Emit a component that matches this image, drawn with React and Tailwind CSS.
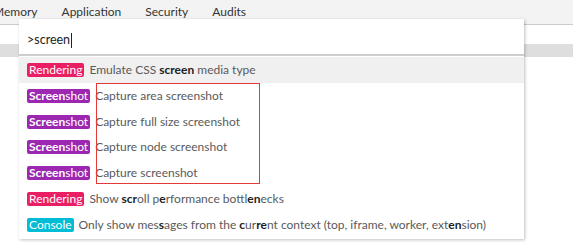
import React from "react";

const rows = [
  {
    color: "bg-[#e91e63]",
    label: [["Rendering", false]],
    text: [["Emulate CSS ", false], ["screen", true], [" media type", false]],
    active: true,
  },
  {
    color: "bg-[#9c27b0]",
    label: [["Screen", true], ["shot", false]],
    text: [["Capture area screenshot", false]],
  },
  {
    color: "bg-[#9c27b0]",
    label: [["Screen", true], ["shot", false]],
    text: [["Capture full size screenshot", false]],
  },
  {
    color: "bg-[#9c27b0]",
    label: [["Screen", true], ["shot", false]],
    text: [["Capture node screenshot", false]],
  },
  {
    color: "bg-[#9c27b0]",
    label: [["Screen", true], ["shot", false]],
    text: [["Capture screenshot", false]],
  },
  {
    color: "bg-[#e91e63]",
    label: [["Rendering", false]],
    text: [
      ["Show ", false],
      ["scr", true],
      ["oll p", false],
      ["e", true],
      ["rformance bottl", false],
      ["en", true],
      ["ecks", false],
    ],
  },
  {
    color: "bg-[#00bcd4]",
    label: [["Console", false]],
    text: [
      ["Only show mes", false],
      ["s", true],
      ["ages from the ", false],
      ["c", true],
      ["ur", false],
      ["re", true],
      ["nt context (top, iframe, worker, ext", false],
      ["en", true],
      ["sion)", false],
    ],
  },
];

function Parts({ parts, boldClass }) {
  return parts.map(([t, b], i) =>
    b ? (
      <span key={i} className={boldClass}>
        {t}
      </span>
    ) : (
      <span key={i}>{t}</span>
    )
  );
}

export default function App() {
  return (
    <div className="relative w-[573px] h-[250px] overflow-hidden bg-white font-['Lato',sans-serif] text-[12px]">
      {/* tabs */}
      <div className="h-[25px] bg-[#f3f3f3] border-b border-[#cccccc] flex items-center text-[#333] ml-[-19px]">
        <span className="px-[12px]">Memory</span>
        <span className="px-[12px]">Application</span>
        <span className="px-[12px]">Security</span>
        <span className="px-[12px]">Audits</span>
      </div>
      <div className="h-[19px]" />
      <div className="h-[13px] bg-[#dedede]" />

      {/* command menu */}
      <div className="absolute left-[19px] top-[19px] w-[505px] bg-white shadow-[1px_1px_3px_rgba(0,0,0,0.25)]">
        <div className="h-[37px] border-b-2 border-[#cdcdcd] flex items-center pl-[8px] pt-[7px] text-[#222] text-[12.5px]">
          <span>&gt;screen</span>
          <span className="w-px h-[15px] bg-[#222] ml-px" />
        </div>
        <div className="pt-px pb-px">
          {rows.map((r, i) => (
            <div
              key={i}
              className={`h-[25.85px] flex items-center pl-[8px] ${r.active ? "bg-[#f0f0f0]" : ""}`}
            >
              <span className={`${r.color} text-white rounded-[2px] px-[2px] leading-[14px]`}>
                <Parts parts={r.label} boldClass="font-bold" />
              </span>
              <span className="ml-[5px] text-[#5a5a5a] whitespace-nowrap">
                <Parts parts={r.text} boldClass="font-bold text-[#222]" />
              </span>
            </div>
          ))}
        </div>
      </div>

      {/* red highlight box */}
      <div className="absolute left-[96px] top-[83px] w-[164px] h-[101px] border border-solid border-[#e53935]" />
    </div>
  );
}
